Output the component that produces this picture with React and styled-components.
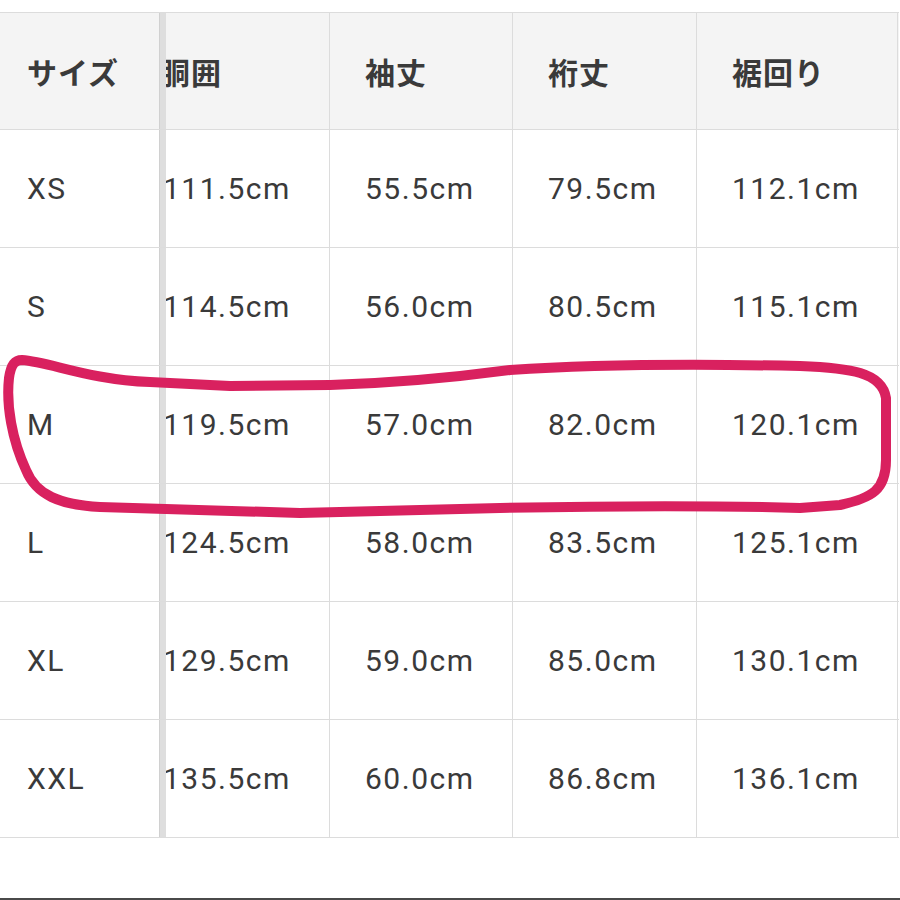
import React from "react";
import styled, { createGlobalStyle } from "styled-components";

const GlobalStyle = createGlobalStyle`
  html, body {
    margin: 0;
    padding: 0;
    background: #fff;
  }
`;

const Page = styled.div`
  position: relative;
  width: 900px;
  height: 900px;
  display: flex;
  flex-direction: column;
  overflow: hidden;
  background: #fff;
  font-family: Roboto, "Noto Sans CJK JP", sans-serif;
  color: #3a3a3a;
`;

const Table = styled.div`
  margin-top: 12px;
  width: 899px;
  border-top: 1px solid #dcdcdc;
`;

const Row = styled.div`
  display: grid;
  grid-template-columns: 166px 164px 183px 184px 201px;
  height: ${({ $head }) => ($head ? "117px" : "118px")};
  box-sizing: border-box;
  border-bottom: 1px solid #dcdcdc;
  background: ${({ $head }) => ($head ? "#f4f4f4" : "#fff")};
`;

const Cell = styled.div`
  display: flex;
  align-items: center;
  box-sizing: border-box;
  overflow: hidden;
  white-space: nowrap;
  padding-left: ${({ $pad }) => $pad}px;
  border-right: 1px solid #dcdcdc;
  font-size: ${({ $head }) => ($head ? "30px" : "30px")};
  font-weight: ${({ $head }) => ($head ? 700 : 400)};
  letter-spacing: ${({ $head }) => ($head ? "1px" : "1.5px")};
  font-family: ${({ $head }) =>
    $head ? `"Noto Sans CJK JP", sans-serif` : `Roboto, "Noto Sans CJK JP", sans-serif`};
`;

const StickyCell = styled(Cell)`
  border-right: 6px solid #dedede;
  box-shadow: inset -1px 0 0 #d0d0d0;
`;

const Clipped = styled.span`
  margin-left: ${({ $head }) => ($head ? "-6px" : "-3px")};
`;

const BottomLine = styled.div`
  margin-top: auto;
  height: 2px;
  background: #4a4a4a;
`;

const Loop = styled.svg`
  position: absolute;
  top: 0;
  left: 0;
  pointer-events: none;
`;

const headers = ["サイズ", "胴囲", "袖丈", "裄丈", "裾回り"];

const rows = [
  ["XS", "111.5cm", "55.5cm", "79.5cm", "112.1cm"],
  ["S", "114.5cm", "56.0cm", "80.5cm", "115.1cm"],
  ["M", "119.5cm", "57.0cm", "82.0cm", "120.1cm"],
  ["L", "124.5cm", "58.0cm", "83.5cm", "125.1cm"],
  ["XL", "129.5cm", "59.0cm", "85.0cm", "130.1cm"],
  ["XXL", "135.5cm", "60.0cm", "86.8cm", "136.1cm"],
];

const TableRow = ({ cells, head }) => (
  <Row $head={head}>
    <StickyCell $head={head} $pad={27}>
      {cells[0]}
    </StickyCell>
    <Cell $head={head} $pad={0}>
      <Clipped $head={head}>{cells[1]}</Clipped>
    </Cell>
    {cells.slice(2).map((c, i) => (
      <Cell key={i} $head={head} $pad={35}>
        {c}
      </Cell>
    ))}
  </Row>
);

const App = () => {
  return (
    <Page>
      <GlobalStyle />
      <Table>
        <TableRow cells={headers} head />
        {rows.map((r) => (
          <TableRow key={r[0]} cells={r} />
        ))}
      </Table>
      <BottomLine />
      <Loop width="900" height="900" viewBox="0 0 900 900">
        <path
          d="M 22 360
             C 50 362, 90 380, 150 382
             L 230 386
             L 330 385
             C 400 383, 450 378, 510 370
             C 600 364, 700 364, 800 366
             C 850 368, 882 372, 886 398
             L 886 460
             C 886 490, 872 498, 840 505
             L 800 508
             C 700 505, 600 506, 500 508
             L 420 510
             L 300 513
             L 100 507
             C 60 505, 36 495, 26 470
             C 12 440, 6 405, 9 378
             C 11 364, 15 360, 22 360 Z"
          fill="none"
          stroke="#d9215f"
          strokeWidth="10"
          strokeLinejoin="round"
          strokeLinecap="round"
        />
      </Loop>
    </Page>
  );
};

export default App;
